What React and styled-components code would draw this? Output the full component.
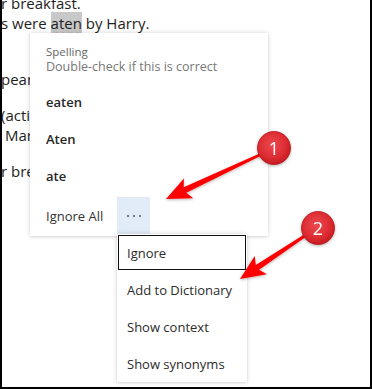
import React from "react";
import styled, { createGlobalStyle } from "styled-components";

const GlobalStyle = createGlobalStyle`
  html, body { margin: 0; padding: 0; background: #fff; }
  body { font-family: "Open Sans", "Noto Sans", Arial, sans-serif; }
`;

const Frame = styled.div`
  position: relative;
  width: 372px;
  height: 389px;
  box-sizing: border-box;
  border-left: 2px solid #000;
  border-right: 2px solid #000;
  border-bottom: 2px solid #000;
  background: #fff;
  overflow: hidden;
`;

const Document = styled.div`
  margin-top: -7px;
  margin-left: -1px;
  font-size: 15px;
  line-height: 20px;
  color: #1e1e1e;
`;

const Paragraph = styled.p`
  margin: 0 0 16px;
  white-space: pre;
`;

const Misspelled = styled.span`
  background: #c8c8c8;
  box-shadow: 0 -1px 0 #c8c8c8, 0 2px 0 #c8c8c8;
  text-decoration: underline wavy #d21f1f;
  text-decoration-thickness: 1px;
  text-underline-offset: 3px;
`;

const Card = styled.div`
  position: absolute;
  left: 28px;
  top: 33px;
  width: 238px;
  height: 203px;
  box-sizing: border-box;
  background: #fff;
  box-shadow: 0 0 5px rgba(0, 0, 0, 0.16), 0 1px 2px rgba(0, 0, 0, 0.08);
  padding-bottom: 3px;
`;

const Header = styled.div`
  padding: 11px 16px 0;
`;

const Title = styled.div`
  font-size: 11.5px;
  line-height: 15px;
  color: #666;
`;

const Subtitle = styled.div`
  font-size: 12.5px;
  line-height: 16px;
  color: #777;
`;

const Suggestions = styled.div`
  margin-top: 8px;
`;

const Suggestion = styled.div`
  height: 37px;
  display: flex;
  align-items: center;
  padding-left: 16px;
  font-size: 13px;
  font-weight: 600;
  color: #262626;
`;

const ActionRow = styled.div`
  margin-top: 3px;
  height: 37px;
  display: flex;
  align-items: center;
`;

const ActionLabel = styled.div`
  padding-left: 16px;
  width: 87px;
  box-sizing: border-box;
  font-size: 13px;
  color: #333;
`;

const MoreButton = styled.div`
  width: 33px;
  height: 37px;
  background: #e2ebf8;
  display: flex;
  align-items: center;
  justify-content: center;
  gap: 4px;
`;

const Dot = styled.span`
  width: 2px;
  height: 2px;
  background: #555;
  border-radius: 1px;
`;

const Submenu = styled.div`
  position: absolute;
  left: 115px;
  top: 234px;
  width: 130px;
  background: #fff;
  box-shadow: 0 0 5px rgba(0, 0, 0, 0.16), 0 1px 2px rgba(0, 0, 0, 0.08);
`;

const MenuItem = styled.div`
  height: 37px;
  display: flex;
  align-items: center;
  padding-left: 10px;
  font-size: 13px;
  color: #2b2b2b;
  outline: ${(p) => (p.$focused ? "1px solid #111" : "none")};
  outline-offset: -2px;
`;

const Annotations = styled.svg`
  position: absolute;
  left: -2px;
  top: 0;
  width: 372px;
  height: 389px;
  pointer-events: none;
`;

function arrowPoints(tip, tail, headLen = 25, headHalf = 11, shaftNear = 3, shaftFar = 1.2) {
  const dx = tail[0] - tip[0];
  const dy = tail[1] - tip[1];
  const len = Math.hypot(dx, dy);
  const ux = dx / len;
  const uy = dy / len;
  const px = uy;
  const py = -ux;
  const bx = tip[0] + ux * headLen;
  const by = tip[1] + uy * headLen;
  const nx = tip[0] + ux * (headLen - 4);
  const ny = tip[1] + uy * (headLen - 4);
  const pts = [
    tip,
    [bx + px * headHalf, by + py * headHalf],
    [nx + px * shaftNear, ny + py * shaftNear],
    [tail[0] + px * shaftFar, tail[1] + py * shaftFar],
    [tail[0] - px * shaftFar, tail[1] - py * shaftFar],
    [nx - px * shaftNear, ny - py * shaftNear],
    [bx - px * headHalf, by - py * headHalf],
  ];
  return pts.map((p) => `${p[0].toFixed(1)},${p[1].toFixed(1)}`).join(" ");
}

function Badge({ cx, cy, n }) {
  return (
    <g filter="url(#soft)">
      <circle cx={cx} cy={cy} r={16.5} fill="url(#ball)" stroke="#b3161b" strokeWidth="0.8" />
      <text
        x={cx}
        y={cy + 6.5}
        textAnchor="middle"
        fontFamily="'Open Sans', Arial, sans-serif"
        fontSize="18"
        fill="#fff"
      >
        {n}
      </text>
    </g>
  );
}

export default function App() {
  return (
    <>
      <GlobalStyle />
      <Frame>
        <Document>
          <Paragraph>
            {"r breakfast.\ns were "}
            <Misspelled>aten</Misspelled>
            {" by Harry.\n "}
          </Paragraph>
          <Paragraph>{"pear."}</Paragraph>
          <Paragraph>{"(active\n Mary"}</Paragraph>
          <Paragraph>{"r break"}</Paragraph>
        </Document>

        <Card>
          <Header>
            <Title>Spelling</Title>
            <Subtitle>Double-check if this is correct</Subtitle>
          </Header>
          <Suggestions>
            <Suggestion>eaten</Suggestion>
            <Suggestion>Aten</Suggestion>
            <Suggestion>ate</Suggestion>
          </Suggestions>
          <ActionRow>
            <ActionLabel>Ignore All</ActionLabel>
            <MoreButton>
              <Dot />
              <Dot />
              <Dot />
            </MoreButton>
          </ActionRow>
        </Card>

        <Submenu>
          <MenuItem $focused>Ignore</MenuItem>
          <MenuItem>Add to Dictionary</MenuItem>
          <MenuItem>Show context</MenuItem>
          <MenuItem>Show synonyms</MenuItem>
        </Submenu>

        <Annotations viewBox="0 0 372 389">
          <defs>
            <filter id="soft" x="-30%" y="-30%" width="160%" height="160%">
              <feDropShadow dx="0" dy="1" stdDeviation="1.5" floodColor="#000" floodOpacity="0.3" />
            </filter>
            <radialGradient id="ball" cx="45%" cy="40%" r="60%">
              <stop offset="0%" stopColor="#ec4a50" />
              <stop offset="70%" stopColor="#dc2b31" />
              <stop offset="100%" stopColor="#c41c22" />
            </radialGradient>
          </defs>
          <polygon points={arrowPoints([166, 199], [268, 151])} fill="#ff0000" filter="url(#soft)" />
          <polygon points={arrowPoints([240, 279], [312, 231])} fill="#ff0000" filter="url(#soft)" />
          <Badge cx={274} cy={148} n="1" />
          <Badge cx={318} cy={228} n="2" />
        </Annotations>
      </Frame>
    </>
  );
}
